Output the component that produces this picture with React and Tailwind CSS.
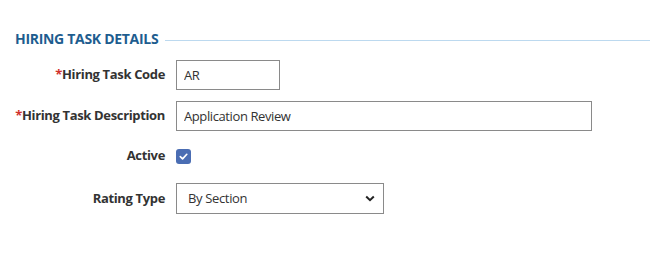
import React from 'react';

const Label = ({ required, children }) => (
  <div className="w-[165px] shrink-0 text-right text-[13px] font-bold text-[#333333] tracking-[-0.35px]">
    {required && <span className="text-[#d0312d]">*</span>}
    {children}
  </div>
);

export default function App() {
  return (
    <div className="w-[650px] h-[262px] bg-white font-['Open_Sans',sans-serif]">
      <div className="flex items-center pt-[30px] pl-[15px]">
        <h2 className="text-[14px] font-bold text-[#1e5d8f] tracking-[-0.3px] leading-[18px]">HIRING TASK DETAILS</h2>
        <div className="flex-1 ml-[7px] h-px bg-[#bcd9ef] mt-[2px]" />
      </div>

      <div className="flex flex-col mt-[12px]">
        <div className="flex items-center gap-[11px] h-[30px]">
          <Label required>Hiring Task Code</Label>
          <input
            readOnly
            value="AR"
            className="w-[104px] h-[30px] border border-[#8a8a8a] px-[7px] text-[13px] text-[#333333] tracking-[-0.4px] outline-none"
          />
        </div>

        <div className="flex items-center gap-[11px] h-[30px] mt-[11px]">
          <Label required>Hiring Task Description</Label>
          <input
            readOnly
            value="Application Review"
            className="w-[416px] h-[30px] border border-[#8a8a8a] px-[7px] text-[13px] text-[#333333] tracking-[-0.4px] outline-none"
          />
        </div>

        <div className="flex items-center gap-[11px] h-[16px] mt-[17px]">
          <Label>Active</Label>
          <div className="w-[15px] h-[15px] rounded-[3px] bg-[#4a6db3] flex items-center justify-center">
            <svg width="11" height="11" viewBox="0 0 12 12" fill="none">
              <path d="M2.5 6.2 L5 8.6 L9.6 3.6" stroke="white" strokeWidth="1.8" strokeLinecap="round" strokeLinejoin="round" />
            </svg>
          </div>
        </div>

        <div className="flex items-center gap-[11px] h-[31px] mt-[19px]">
          <Label>Rating Type</Label>
          <div className="w-[208px] h-[31px] border border-[#8a8a8a] flex items-center justify-between pl-[11px] pr-[8px]">
            <span className="text-[13px] text-[#333333] tracking-[-0.35px]">By Section</span>
            <svg width="10" height="7" viewBox="0 0 10 7" fill="none">
              <path d="M1.2 1.5 L5 5.2 L8.8 1.5" stroke="#222222" strokeWidth="2" />
            </svg>
          </div>
        </div>
      </div>
    </div>
  );
}
